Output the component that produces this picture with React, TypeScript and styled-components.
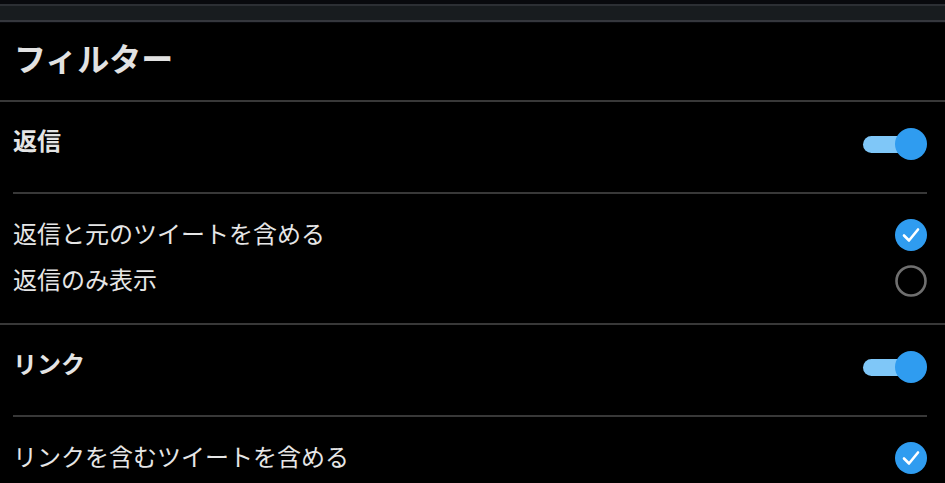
import React from "react";
import styled, { createGlobalStyle } from "styled-components";

const Global = createGlobalStyle`
  html, body { margin: 0; padding: 0; background: #000; }
  body { font-family: "Noto Sans CJK JP", "Noto Sans", sans-serif; color: #e6e6e6; }
  * { box-sizing: border-box; }
`;

const Page = styled.div`
  width: 945px;
  height: 483px;
  overflow: hidden;
  background: #000;
`;

const TopBar = styled.div`
  height: 23px;
  background: #08090d;
  padding-top: 4px;
`;

const TopBarInner = styled.div`
  height: 18px;
  background: #181c1f;
  border-top: 2px solid #2c2f34;
  border-bottom: 2px solid #35373d;
`;

const Title = styled.div`
  height: 79px;
  padding-left: 14px;
  padding-bottom: 10px;
  display: flex;
  align-items: center;
  font-size: 32px;
  font-weight: 700;
  color: #e2e2e2;
  border-bottom: 2px solid #383838;
`;

const Section = styled.section<{ $last?: boolean }>`
  border-bottom: ${(p) => (p.$last ? "none" : "2px solid #383838")};
`;

const HeadRow = styled.div`
  height: 92px;
  margin: 0 18px 0 13px;
  border-bottom: 2px solid #383838;
  display: flex;
  align-items: flex-start;
  justify-content: space-between;
  padding-top: 22px;
`;

const HeadText = styled.div`
  font-size: 24px;
  font-weight: 700;
  line-height: 32px;
  color: #e4e4e4;
`;

const Options = styled.div`
  padding: 18px 18px 19px 13px;
  display: flex;
  flex-direction: column;
`;

const OptionRow = styled.div`
  height: 46px;
  flex-shrink: 0;
  display: flex;
  align-items: center;
  justify-content: space-between;
`;

const OptionText = styled.div`
  font-size: 24px;
  line-height: 32px;
  padding-bottom: 5px;
  color: #e6e6e6;
`;

const Toggle = styled.div`
  position: relative;
  width: 64px;
  height: 32px;
  margin-top: 4px;
  display: flex;
  align-items: center;
`;

const Track = styled.div`
  width: 62px;
  height: 17px;
  border-radius: 9px;
  background: #7fc7f8;
`;

const Knob = styled.div`
  position: absolute;
  right: 0;
  top: 0;
  width: 32px;
  height: 32px;
  border-radius: 50%;
  background: #2f9cf0;
`;

const Radio = ({ checked }: { checked: boolean }) =>
  checked ? (
    <svg width="32" height="32" viewBox="0 0 32 32">
      <circle cx="16" cy="16" r="16" fill="#2f9cf0" />
      <path d="M9 16.5 L14 21.5 L23 10.5" fill="none" stroke="#fff" strokeWidth="2.6" strokeLinecap="round" strokeLinejoin="round" />
    </svg>
  ) : (
    <svg width="32" height="32" viewBox="0 0 32 32">
      <circle cx="16" cy="16" r="14.5" fill="none" stroke="#6f6f6f" strokeWidth="2.6" />
    </svg>
  );

const Switch = () => (
  <Toggle>
    <Track />
    <Knob />
  </Toggle>
);

export default function App() {
  return (
    <>
      <Global />
      <Page>
        <TopBar>
          <TopBarInner />
        </TopBar>
        <Title>フィルター</Title>
        <Section>
          <HeadRow>
            <HeadText>返信</HeadText>
            <Switch />
          </HeadRow>
          <Options>
            <OptionRow>
              <OptionText>返信と元のツイートを含める</OptionText>
              <Radio checked />
            </OptionRow>
            <OptionRow>
              <OptionText>返信のみ表示</OptionText>
              <Radio checked={false} />
            </OptionRow>
          </Options>
        </Section>
        <Section $last>
          <HeadRow>
            <HeadText>リンク</HeadText>
            <Switch />
          </HeadRow>
          <Options>
            <OptionRow>
              <OptionText>リンクを含むツイートを含める</OptionText>
              <Radio checked />
            </OptionRow>
          </Options>
        </Section>
      </Page>
    </>
  );
}
